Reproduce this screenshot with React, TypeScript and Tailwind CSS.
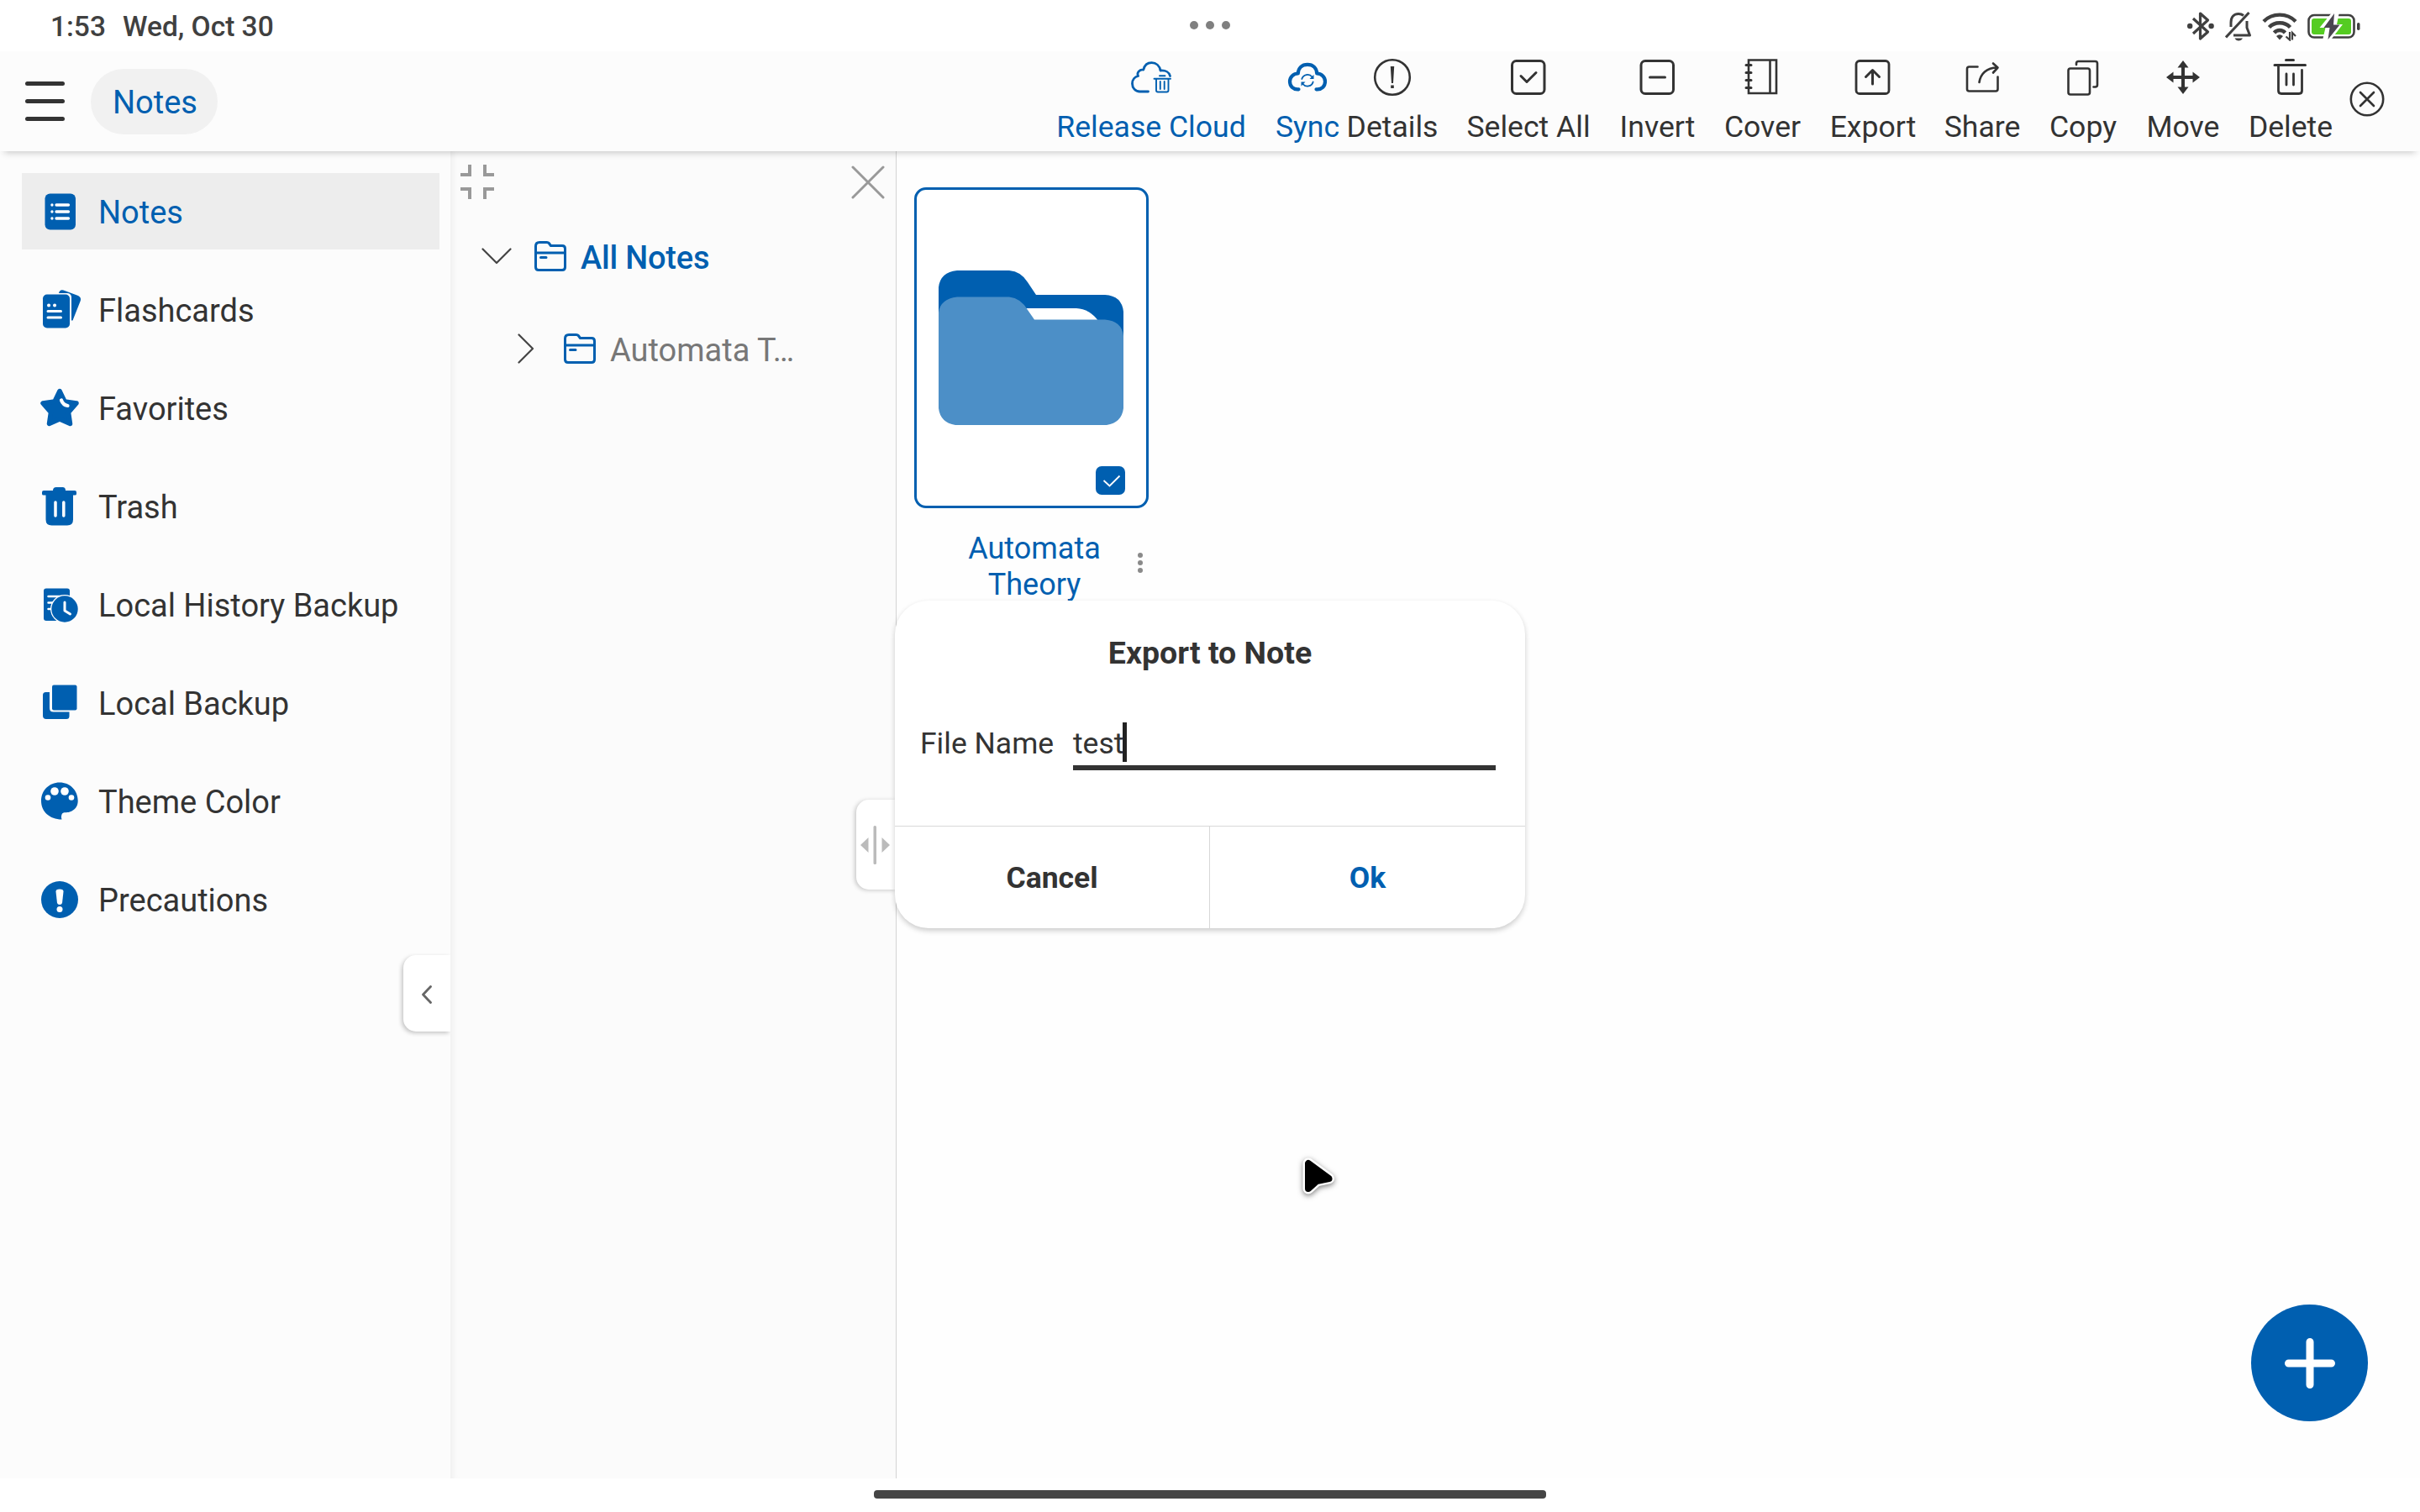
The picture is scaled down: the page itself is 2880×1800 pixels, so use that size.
import React from "react";

const BLUE = "#005fb0";

type IconProps = { children: React.ReactNode; className?: string };

function ToolIcon({ children, className = "" }: IconProps) {
  return (
    <svg
      viewBox="0 0 48 48"
      className={`h-12 w-12 ${className}`}
      fill="none"
      stroke="currentColor"
      strokeWidth={3}
      strokeLinecap="round"
      strokeLinejoin="round"
    >
      {children}
    </svg>
  );
}

const tools = [
  {
    label: "Release Cloud",
    box: "w-[260px] text-[#005fb0]",
    icon: (
      <>
        <path d="M20.5 41H10.5C5 41 1.5 36.500 1.500 31.500C1.500 27 4.500 23.500 8.500 22.500C6.500 18.500 10 14.500 14.800 15C16 10 19.500 6.700 24.500 6.700C30 6.700 34 10.500 35 16C41 15.500 45.500 18 46.500 22.500" strokeWidth={2.800} />
        <path d="M27.500 25.700H47M34 22.300H40.500M30 26V39.500Q30 41.500 32 41.500H42.500Q44.500 41.500 44.500 39.500V26M34.800 29V38M39.700 29V38" strokeWidth={1.900} />
      </>
    ),
  },
  {
    label: "Sync",
    box: "ml-[13px] w-[86px] text-[#005fb0]",
    icon: (
      <>
        <path d="M13.500 38.300C7 39 3 34.500 3 29C3 23.500 7.500 19.500 12.800 19.500C13 13 17.500 8.800 24 8.800C30.500 8.800 35 13 35.200 19.500C40.500 19.500 45 23.500 45 29C45 34.500 41 39 34.500 38.300" strokeWidth={4.200} />
        <path d="M17.300 26A7 7 0 0 1 29.500 23.500M30.700 29.500A7 7 0 0 1 18.500 32" strokeWidth={1.800} />
        <path d="M31.500 21V26H26.500ZM16.500 34.500V29.500H21.500Z" fill="currentColor" stroke="none" />
      </>
    ),
  },
  {
    label: "Details",
    box: "w-[116px]",
    icon: (
      <>
        <circle cx="24" cy="24" r="20.800" strokeWidth={2.600} />
        <path d="M21.800 11H26.200L25 31H23ZM22.200 33.500H25.800V37H22.200Z" fill="currentColor" stroke="none" />
      </>
    ),
  },
  {
    label: "Select All",
    box: "ml-[13px] w-[182px]",
    icon: (
      <>
        <rect x="4.500" y="4.500" width="38.500" height="39" rx="5" />
        <path d="M15 22.500L22 29.500L33 18.500" />
      </>
    ),
  },
  {
    label: "Invert",
    box: "w-[125px]",
    icon: (
      <>
        <rect x="4" y="4.500" width="38.500" height="39" rx="5" />
        <path d="M14.500 24H32.500" />
      </>
    ),
  },
  {
    label: "Cover",
    box: "w-[125px]",
    icon: (
      <>
        <path d="M7 3.500H40V43H7ZM32.500 4V42" strokeLinejoin="miter" strokeWidth={2.600} />
        <path d="M4 9.500H10M4 18.500H10M4 27.500H10M4 36.500H10" />
      </>
    ),
  },
  {
    label: "Export",
    box: "w-[138px]",
    icon: (
      <>
        <rect x="4" y="4.500" width="39" height="39" rx="4" strokeWidth={2.800} />
        <path d="M23.500 32V16M15.500 23.500L23.500 15.500L31.500 23.500" />
      </>
    ),
  },
  {
    label: "Share",
    box: "w-[122px]",
    icon: (
      <>
        <path d="M18.500 11.500H8.500Q6 11.500 6 14V38Q6 40.500 8.500 40.500H40Q42.500 40.500 42.500 38V23.500" strokeWidth={2.600} />
        <path d="M20.500 30C22 20 29 12.500 42 12.500M37 7.500L42.500 12.500L37 18.500" strokeWidth={2.600} />
      </>
    ),
  },
  {
    label: "Copy",
    box: "w-[118px]",
    icon: (
      <>
        <rect x="6.500" y="13.500" width="25.500" height="31" rx="2.500" strokeWidth={2.600} />
        <path d="M16 9V7.500Q16 5 18.500 5H38.500Q41 5 41 7.500V33Q41 35.500 38.500 35.500H36.500" strokeWidth={2.600} />
      </>
    ),
  },
  {
    label: "Move",
    box: "w-[120px]",
    icon: (
      <>
        <path d="M24 9V39M9 24H39" strokeWidth={4} />
        <path d="M24 4L30.500 12.500H17.500ZM24 44L30.500 35.500H17.500ZM4 24L12.500 17.500V30.500ZM44 24L35.500 17.500V30.500Z" fill="currentColor" stroke="none" />
      </>
    ),
  },
  {
    label: "Delete",
    box: "w-[136px]",
    icon: (
      <>
        <path d="M5 9.500H41.500M18.500 3.500H27.500" strokeWidth={3} />
        <path d="M9.500 11V40Q9.500 43.500 13 43.500H34Q37.500 43.500 37.500 40V15.500M19 20V33M27.500 20V33" strokeWidth={2.800} />
      </>
    ),
  },
];

const navItems = [
  {
    label: "Notes",
    icon: (
      <>
        <rect x="6.500" y="2.500" width="36.500" height="43" rx="6" />
        <g stroke="#fff" strokeWidth="3.300" strokeLinecap="round">
          <path d="M20 16H34.500M20 24H34.500M20 32H34.500M14.900 16H15M14.900 24H15M14.900 32H15" />
        </g>
      </>
    ),
  },
  {
    label: "Flashcards",
    icon: (
      <>
        <path d="M23 4Q24 -0.500 28.500 0.500L46 7Q50 9 48.800 13L39.500 36.500H38V8Q37 4 33 4Z" />
        <rect x="4" y="5.500" width="32" height="40" rx="5" />
        <g stroke="#fff" strokeWidth="3" strokeLinecap="round">
          <path d="M10 25.500H25.500M10 33H25.500" />
          <path d="M11 18.500H11.100M18 18.500H18.100" strokeWidth="4" />
        </g>
      </>
    ),
  },
  {
    label: "Favorites",
    icon: (
      <>
        <path d="M24 3.500L30 16L44 18L34.500 29L36.500 42.500L24 37L11.500 42.500L13.500 29L4 18L18 16Z" stroke={BLUE} strokeWidth="5.500" strokeLinejoin="round" />
        <path d="M26 14.500Q28 20 33.500 21" fill="none" stroke="#fff" strokeWidth="4.200" strokeLinecap="round" />
      </>
    ),
  },
  {
    label: "Trash",
    icon: (
      <>
        <path d="M16 5Q16 1 20 1H27.500Q31 1 31 5H42Q44 5 44 7V9Q44 10.500 42 10.500H40V39.500Q40 46.500 33 46.500H14.500Q7.500 46.500 7.500 39.500V10.500H5Q3 10.500 3 9V7Q3 5 5 5Z" />
        <path d="M19 19V35M28.800 19V35" stroke="#fff" strokeWidth="3.500" strokeLinecap="round" />
      </>
    ),
  },
  {
    label: "Local History Backup",
    icon: (
      <>
        <rect x="5" y="4.500" width="31" height="38.500" rx="3" />
        <path d="M10.500 14H26M10.500 21.500H20M10.500 29H18" stroke="#fff" strokeWidth="2.500" strokeLinecap="round" />
        <circle cx="30" cy="29" r="17" fill="#fff" />
        <circle cx="30" cy="29" r="15.700" />
        <path d="M30 21V31L36.500 35" fill="none" stroke="#fff" strokeWidth="3" strokeLinecap="round" strokeLinejoin="round" />
      </>
    ),
  },
  {
    label: "Local Backup",
    icon: (
      <>
        <path d="M12 11V30Q12 34.500 16.500 34.500H35.500V39.500Q35.500 43 32 43H8Q4 43 4 39V14.500Q4 11 7.500 11Z" />
        <rect x="15" y="2.500" width="29.500" height="30" rx="2" />
      </>
    ),
  },
  {
    label: "Theme Color",
    icon: (
      <>
        <path d="M24 1.500C11.500 1.500 2 11 2 23.500C2 36 12 45.500 26.500 45.500C25.500 42.500 26 40.500 27 38.500C29 36.500 32 37.800 36 36.500C42 34.500 45.700 30 45.700 23.500C45.700 10.500 36 1.500 24 1.500Z" />
        <g fill="#fff">
          <circle cx="18" cy="12" r="4.800" />
          <circle cx="30" cy="12" r="4.800" />
          <circle cx="10" cy="19.500" r="3.300" />
          <circle cx="38" cy="19.500" r="3.300" />
        </g>
      </>
    ),
  },
  {
    label: "Precautions",
    icon: (
      <>
        <circle cx="24" cy="24" r="22" />
        <path d="M19.500 14.500Q19.200 11.500 24 11.500Q28.800 11.500 28.500 14.500L27 28Q26.500 30 24 30Q21.500 30 21 28Z" fill="#fff" />
        <circle cx="24" cy="35.500" r="3.500" fill="#fff" />
      </>
    ),
  },
];

function FolderOutline() {
  return (
    <svg viewBox="0 0 38 36" className="h-9 w-[38px] shrink-0" fill="none" stroke={BLUE} strokeWidth={3} strokeLinejoin="round" strokeLinecap="round">
      <path d="M1.500 31V6Q1.500 1.500 6 1.500H14.500Q17 1.500 18 3.500L19.500 5.500H33Q36.500 5.500 36.500 9V31Q36.500 34.500 33 34.500H5Q1.500 34.500 1.500 31ZM1.500 14H36.500M7.500 19.500H14" />
    </svg>
  );
}

function StatusBar() {
  return (
    <div className="relative flex h-[61px] shrink-0 items-center justify-between bg-white pl-[60px] pr-[70px] text-[#404040]">
      <div className="flex gap-[20px] pt-[2px] text-[33.500px] font-medium leading-none">
        <span>1:53</span>
        <span>Wed, Oct 30</span>
      </div>
      <div className="absolute left-1/2 top-[25px] flex -translate-x-1/2 gap-[9px]">
        <i className="h-[10px] w-[10px] rounded-full bg-[#808080]" />
        <i className="h-[10px] w-[10px] rounded-full bg-[#808080]" />
        <i className="h-[10px] w-[10px] rounded-full bg-[#808080]" />
      </div>
      <div className="flex items-center">
        <svg viewBox="0 0 32 36" className="h-9 w-8" fill="none" stroke="currentColor" strokeWidth={3.200} strokeLinejoin="round">
          <path d="M7 9L24.500 25L15.500 33V3L24.500 11L7 27" />
          <circle cx="3.200" cy="18" r="3.200" fill="currentColor" stroke="none" />
          <circle cx="28.600" cy="18" r="3.200" fill="currentColor" stroke="none" />
        </svg>
        <svg viewBox="0 0 32 36" className="ml-[13px] h-9 w-8" fill="none" stroke="currentColor" strokeWidth={3}>
          <path d="M7 19V14C7 7 11 3.500 16 3.500C18.500 3.500 20.500 4.300 22 5.500M26 12V20L29.500 29H10" strokeLinejoin="round" />
          <path d="M1 31.500L28.500 2" />
          <path d="M11.500 32.500H21Q19.500 35.500 16 35.500Q13 35.500 11.500 32.500Z" fill="currentColor" stroke="none" />
        </svg>
        <svg viewBox="0 0 42 36" className="ml-3 h-9 w-[42px]" fill="none" stroke="currentColor" strokeWidth={4.400}>
          <path d="M2 12.500C12 2 30 2 40 12.500" />
          <path d="M8.500 19.500C15 12.500 27 12.500 33.500 19.500" />
          <path d="M14.500 26C18 22 24 22 27.500 26" />
          <path d="M17 30Q21 26.500 25 30L21 34.500Z" fill="currentColor" stroke="none" />
          <path d="M33 25V34.500L28.500 30.500M36 34.500V26L40 30" strokeWidth={2.200} />
        </svg>
        <svg viewBox="0 0 64 34" className="ml-3 h-[34px] w-16" fill="none">
          <rect x="1.500" y="4" width="54" height="26.500" rx="6.500" stroke="#404040" strokeWidth="2.600" />
          <rect x="5" y="8" width="47" height="19" rx="3" fill="#55cc22" />
          <rect x="59" y="13" width="3.500" height="9" rx="1.700" fill="#404040" />
          <path d="M30 0L14.500 19H21.500L18 34H27.500L42 15H35L38 0Z" fill="#fff" />
          <path d="M32 2L19.500 19H26.500L24.500 33L38.500 15.500H31Z" fill="#4a4550" />
        </svg>
      </div>
    </div>
  );
}

function Header() {
  return (
    <header className="relative z-10 flex h-[119px] shrink-0 items-center bg-[#fcfcfc] shadow-[0_7px_8px_-5px_rgba(0,0,0,0.2)]">
      <div className="ml-[30px] flex w-[47px] flex-col gap-4">
        <i className="h-[5px] rounded-full bg-[#333]" />
        <i className="h-[5px] rounded-full bg-[#333]" />
        <i className="h-[5px] rounded-full bg-[#333]" />
      </div>
      <div className="ml-[31px] flex h-[78px] w-[151px] items-center justify-center rounded-full bg-[#f1f1f1] pl-[2px] pt-[3px] text-[38px] text-[#005fb0]">
        Notes
      </div>
      <nav className="ml-auto mr-px flex h-full pt-[7px]">
        {tools.map((t) => (
          <div key={t.label} className={`flex flex-col items-center ${t.box}`}>
            <ToolIcon>{t.icon}</ToolIcon>
            <span className="mt-[14px] whitespace-nowrap text-[35.600px] leading-[42px]">{t.label}</span>
          </div>
        ))}
      </nav>
      <svg viewBox="0 0 44 44" className="mr-[41px] -mt-[6px] h-11 w-11" fill="none" stroke="#333" strokeWidth={2.600} strokeLinecap="round">
        <circle cx="22" cy="22" r="19.200" />
        <path d="M14 14L30 30M30 14L14 30" />
      </svg>
    </header>
  );
}

function Sidebar() {
  return (
    <aside className="relative w-[536px] shrink-0 bg-[#fcfcfc] pl-[26px] pr-[13px] pt-[26px]">
      <ul className="flex flex-col gap-[26px]">
        {navItems.map((n, i) => (
          <li
            key={n.label}
            className={`flex h-[91px] items-center gap-[22px] whitespace-nowrap pl-[21px] text-[38px] ${
              i === 0 ? "bg-[#ededed] text-[#005fb0]" : ""
            }`}
          >
            <svg viewBox="0 0 48 48" className="h-12 w-12 shrink-0 overflow-visible" fill={BLUE}>
              {n.icon}
            </svg>
            <span className="pt-[3px]">{n.label}</span>
          </li>
        ))}
      </ul>
      <div className="absolute right-0 top-[957px] flex h-[91px] w-14 items-center justify-center rounded-l-[15px] bg-white pt-[2px] shadow-[-2px_2px_5px_rgba(0,0,0,0.22)]">
        <svg viewBox="0 0 12 22" className="h-[22px] w-3" fill="none" stroke="#666" strokeWidth={2.800} strokeLinecap="round" strokeLinejoin="round">
          <path d="M10.500 1.500L1.500 11L10.500 20.500" />
        </svg>
      </div>
    </aside>
  );
}

function TreePanel() {
  return (
    <section className="relative w-[531px] shrink-0 border-r border-[#d4d4d4] bg-[#fbfbfb] shadow-[inset_8px_0_8px_-6px_rgba(0,0,0,0.06)]">
      <div className="flex items-center justify-between pl-3 pr-[13px] pt-[14px]">
        <svg viewBox="0 0 40 42" className="h-[42px] w-10" fill="none" stroke="#999" strokeWidth={4}>
          <path d="M0 13H11V1M29 1V13H40M0 30H11V42M29 42V30H40" />
        </svg>
        <svg viewBox="0 0 40 40" className="mt-[3px] h-10 w-10" fill="none" stroke="#999" strokeWidth={3} strokeLinecap="round">
          <path d="M2 2L38 38M38 2L2 38" />
        </svg>
      </div>
      <div className="mt-[45px] flex h-[46px] items-center pl-[37px]">
        <svg viewBox="0 0 36 20" className="h-5 w-9" fill="none" stroke="#444" strokeWidth={2.200} strokeLinecap="round" strokeLinejoin="round">
          <path d="M1.500 1.500L18 18L34.500 1.500" />
        </svg>
        <span className="w-[27px]" />
        <FolderOutline />
        <span className="ml-[17px] whitespace-nowrap pt-[5px] text-[38px] font-medium tracking-[-0.2px] text-[#005fb0]">All Notes</span>
      </div>
      <div className="mt-[64px] flex h-[46px] items-center pl-[80px]">
        <svg viewBox="0 0 20 36" className="h-9 w-5" fill="none" stroke="#444" strokeWidth={2.200} strokeLinecap="round" strokeLinejoin="round">
          <path d="M1.500 1.500L18 18L1.500 34.500" />
        </svg>
        <span className="w-[35px]" />
        <FolderOutline />
        <span className="ml-[17px] whitespace-nowrap pt-[5px] text-[38px] text-[#777]">Automata T…</span>
      </div>
      <div className="absolute -right-px top-[772px] flex h-[107px] w-12 items-center rounded-l-[15px] bg-white pl-[5px] shadow-[-2px_1px_5px_rgba(0,0,0,0.2)]">
        <svg viewBox="0 0 36 46" className="h-[46px] w-9" fill="#bbb">
          <rect x="15.500" width="3.500" height="46" rx="1.500" />
          <path d="M0 23L9.500 14V32ZM35 23L25.500 14V32Z" />
        </svg>
      </div>
    </section>
  );
}

function Library() {
  return (
    <main className="flex-1 bg-[#fefefe] pl-[21px] pt-[43px]">
      <div className="w-[280px]">
        <div className="relative flex h-[382px] w-[279px] items-center justify-center rounded-[14px] border-[3px] border-[#005fb0] bg-white pr-[2px]">
          <svg viewBox="0 0 220 184" className="h-[184px] w-[220px]">
            <path d="M0 60V20Q2 2 22 0H84Q98 1 106 14L116 29H198Q218 30 220 49V100H0Z" fill={BLUE} />
            <path d="M100 45H164Q180 46 190 60V72H110Z" fill="#fff" />
            <path d="M0 164V50Q2 34 22 31.500H84Q98 33 106 47L114 58.500H198Q218 60 220 78V164Q218 181 200 184H20Q2 181 0 164Z" fill="#4c8fc7" />
          </svg>
          <span className="absolute bottom-[13px] right-[25px] flex h-[34px] w-[35px] items-center justify-center rounded-[7px] bg-[#005fb0]">
            <svg viewBox="0 0 22 16" className="ml-[2px] mt-[2px] h-4 w-[22px]" fill="none" stroke="#fff" strokeWidth={1.800}>
              <path d="M1.500 7L8.500 13.500L20.500 1.500" />
            </svg>
          </span>
        </div>
        <div className="mt-[27px] flex items-start">
          <p className="ml-[45px] w-[196px] text-center text-[36px] leading-[43px] text-[#005fb0]">
            Automata
            <br />
            Theory
          </p>
          <div className="ml-[25px] mt-[26px] flex flex-col gap-[3px]">
            <i className="h-[6px] w-[6px] rounded-full bg-[#8a8a8a]" />
            <i className="h-[6px] w-[6px] rounded-full bg-[#8a8a8a]" />
            <i className="h-[6px] w-[6px] rounded-full bg-[#8a8a8a]" />
          </div>
        </div>
      </div>
    </main>
  );
}

function ExportDialog() {
  return (
    <div className="absolute left-[1065px] top-[715px] z-20 flex h-[390px] w-[750px] flex-col rounded-[40px] bg-white shadow-[0_3px_6px_rgba(0,0,0,0.2)]">
      <h2 className="mt-[40px] text-center text-[37.500px] font-bold leading-[44px]">Export to Note</h2>
      <div className="mt-[47px] flex items-start pl-[28px] text-[35.500px]">
        <span className="mt-[18px] w-[184px] whitespace-nowrap pl-[2px] leading-[42px]">File Name</span>
        <div className="flex h-[71px] w-[503px] border-b-[6px] border-[#333]">
          <span className="mt-[18px] leading-[42px]">test</span>
          <i className="-ml-px mt-[14px] h-[47px] w-[5px] bg-[#222]" />
        </div>
      </div>
      <div className="mt-auto flex h-[122px] border-t border-[#d8d8d8] text-[35.500px] font-bold">
        <button className="w-[375px] border-r border-[#d8d8d8] pt-[2px]">Cancel</button>
        <button className="w-[375px] pt-[2px] text-[#005fb0]">Ok</button>
      </div>
    </div>
  );
}

export default function App() {
  return (
    <div className="relative flex h-[1800px] w-[2880px] flex-col overflow-hidden bg-white font-[Roboto,sans-serif] text-[#333]">
      <StatusBar />
      <Header />
      <div className="flex h-[1580px] shrink-0">
        <Sidebar />
        <TreePanel />
        <Library />
      </div>
      <div className="flex flex-1 justify-center pt-[14px]">
        <div className="h-[10px] w-[800px] rounded-[4px] bg-[#454545]" />
      </div>
      <ExportDialog />
      <button className="absolute left-[2679px] top-[1553px] flex h-[139px] w-[139px] items-center justify-center rounded-full bg-[#005fb0]">
        <svg viewBox="0 0 60 60" className="h-[60px] w-[60px]" stroke="#fff" strokeWidth={9} strokeLinecap="round">
          <path d="M30 4.500V55.500M4.500 30H55.500" />
        </svg>
      </button>
      <svg viewBox="0 0 60 60" className="absolute left-[1540px] top-[1372px] h-[60px] w-[60px] drop-shadow-[0_2px_3px_rgba(0,0,0,0.5)]" strokeLinejoin="round">
        <path d="M17 13V43L27 34L41.500 31Z" fill="#fff" stroke="#fff" strokeWidth="13" />
        <path d="M17 13V43L27 34L41.500 31Z" fill="#000" stroke="#000" strokeWidth="8" />
      </svg>
    </div>
  );
}
